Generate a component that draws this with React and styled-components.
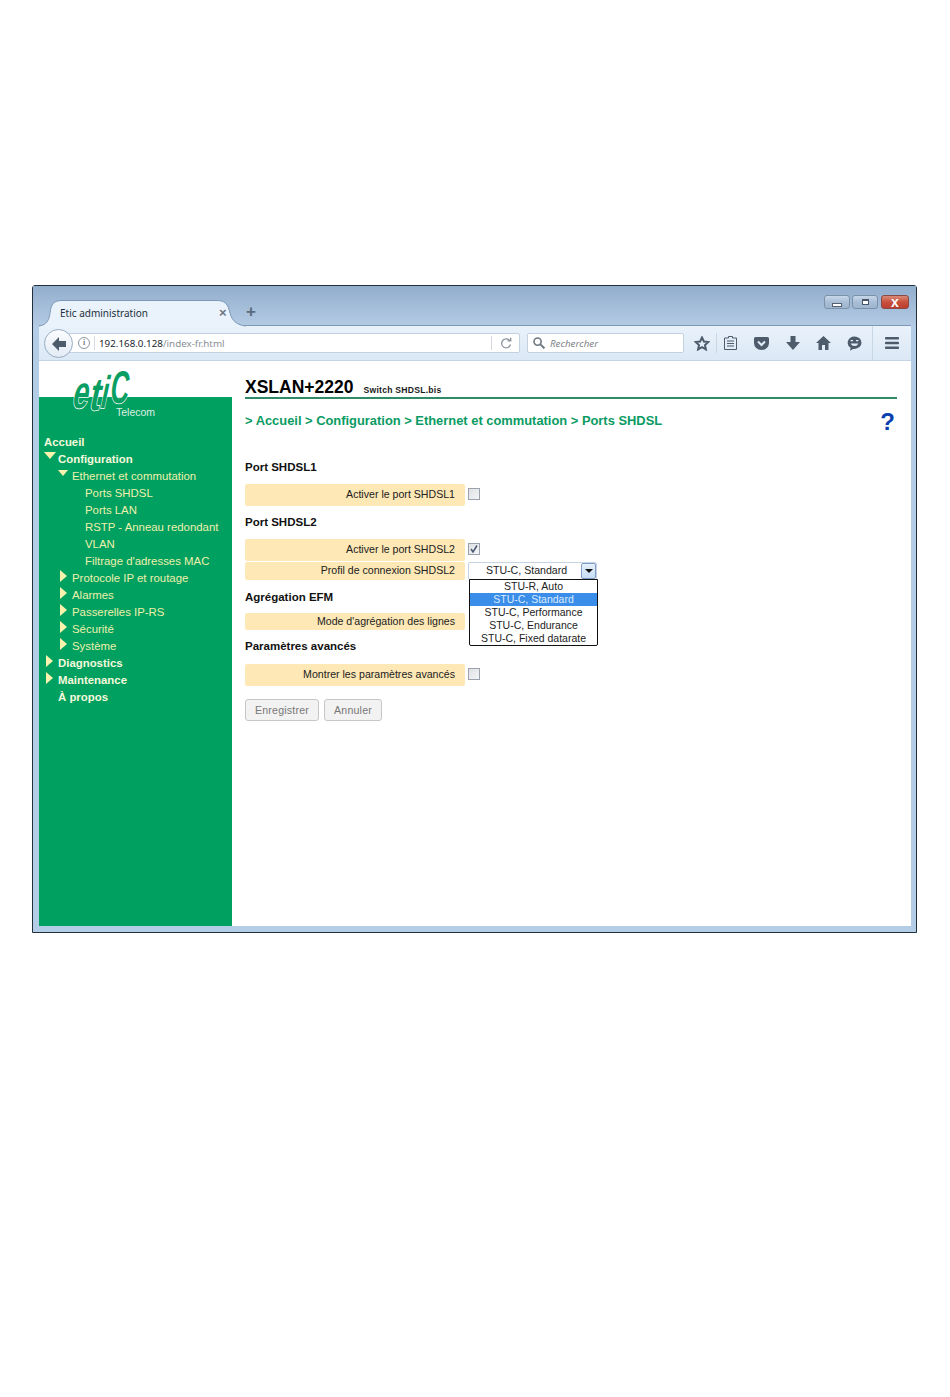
import React from "react";
import styled, { createGlobalStyle } from "styled-components";

const GlobalStyle = createGlobalStyle`
  html, body { margin: 0; padding: 0; background: #fff; }
  body { font-family: "Liberation Sans", Arial, sans-serif; }
`;

const Page = styled.div`
  width: 950px;
  height: 1397px;
  padding: 285px 0 0 32px;
  box-sizing: border-box;
`;

const Window = styled.div`
  width: 885px;
  height: 648px;
  box-sizing: border-box;
  border: 1px solid #22303c;
  border-radius: 3px 3px 0 0;
  background: #b4cde6;
  display: flex;
  flex-direction: column;
`;

const TitleBar = styled.div`
  height: 39px;
  flex: none;
  display: flex;
  justify-content: space-between;
  background: linear-gradient(#92aecd, #b3cae3);
`;

const Tab = styled.div`
  position: relative;
  z-index: 1;
  width: 207px;
  height: 26px;
  margin: 14px 0 -1px 6px;
  box-sizing: border-box;
  padding: 0 0 0 21px;
  display: flex;
  align-items: center;
  font: 10px "Noto Sans", "Liberation Sans", sans-serif;
  color: #24303c;
  span { position: relative; }
  svg { position: absolute; left: 0; top: 0; }
`;

const TabClose = styled.span`
  position: absolute !important;
  left: 180px;
  top: 5px;
  font: bold 13px "Liberation Sans", sans-serif;
  color: #6d7580;
`;

const NewTab = styled.div`
  position: absolute;
  left: 207px;
  top: 2px;
  font: bold 17px "Liberation Sans", sans-serif;
  color: #5a6b7e;
`;

const Controls = styled.div`
  display: flex;
  gap: 2px;
  padding: 9px 7px 0 0;
`;

const ControlButton = styled.div`
  width: ${(p) => (p.$close ? "28px" : "26px")};
  height: 14px;
  margin-left: ${(p) => (p.$close ? "1px" : "0")};
  box-sizing: border-box;
  border: 1px solid ${(p) => (p.$close ? "#8a4a44" : "#7c90a8")};
  border-radius: 3px;
  background: ${(p) =>
    p.$close
      ? "linear-gradient(#d98a78 0, #c8503c 50%, #bd3f30 100%)"
      : "linear-gradient(#c7d7e8 0, #a9bfd7 50%, #9db5cf 100%)"};
  display: flex;
  align-items: center;
  justify-content: center;
`;

const MinGlyph = styled.div`
  width: 8px;
  height: 2px;
  margin-top: 5px;
  background: #fff;
  border: 1px solid #54606e;
`;

const MaxGlyph = styled.div`
  width: 5px;
  height: 3px;
  background: #fff;
  border: 1px solid #4a5665;
  border-top-width: 2px;
`;

const CloseGlyph = styled.div`
  font: bold 14px/11px "Liberation Sans", sans-serif;
  color: #fff;
`;

const Toolbar = styled.div`
  position: relative;
  height: 36px;
  flex: none;
  display: flex;
  align-items: center;
  padding: 0 0 0 12px;
  margin: 0 5px 0 6px;
  box-sizing: border-box;
  border-top: 1px solid #7e99b6;
  background: linear-gradient(#e9f2fb, #dbe8f5);
  border-bottom: 1px solid #c4d4e4;
`;

const BackButton = styled.div`
  position: absolute;
  left: 5px;
  top: 3px;
  width: 27px;
  height: 27px;
  border-radius: 50%;
  border: 1px solid #98adc2;
  background: linear-gradient(#fbfdff, #e3ebf4);
  display: flex;
  align-items: center;
  justify-content: center;
`;

const UrlBar = styled.div`
  width: 469px;
  height: 20px;
  padding-left: 37px;
  box-sizing: border-box;
  flex: none;
  border: 1px solid #c3d1e0;
  border-radius: 2px;
  background: #fff;
  display: flex;
  align-items: center;
  font: 9.8px "Noto Sans", "Liberation Sans", sans-serif;
  color: #8a8f96;
`;

const InfoIcon = styled.div`
  width: 10px;
  height: 10px;
  border: 1px solid #8d969f;
  border-radius: 50%;
  font: bold 8px/10px "Liberation Serif", serif;
  text-align: center;
  color: #7b848d;
  margin-left: -11px;
  flex: none;
`;

const Divider = styled.div`
  width: 1px;
  height: 14px;
  background: #d3d9df;
  margin: ${(p) => p.$margin};
  flex: none;
`;

const Host = styled.span`
  color: #22282e;
`;

const Reload = styled.div`
  width: 27px;
  display: flex;
  justify-content: center;
`;

const SearchBox = styled.div`
  width: 157px;
  height: 20px;
  margin-left: 7px;
  padding-left: 5px;
  box-sizing: border-box;
  flex: none;
  border: 1px solid #c3d1e0;
  border-radius: 2px;
  background: #fff;
  display: flex;
  align-items: center;
  gap: 5px;
  font: italic 9.8px "Noto Sans", "Liberation Sans", sans-serif;
  color: #7d838a;
`;

const ToolIcons = styled.div`
  display: flex;
  align-items: center;
  height: 100%;
  margin-left: 10px;
`;

const ToolIcon = styled.div`
  width: ${(p) => p.$w || 31}px;
  display: flex;
  justify-content: center;
  flex: none;
`;

const ToolSep = styled.div`
  width: 1px;
  height: ${(p) => p.$h}px;
  margin: ${(p) => p.$margin};
  background: #c8d7e6;
  flex: none;
`;

const Content = styled.div`
  flex: 1;
  min-height: 0;
  display: flex;
  margin: 0 5px 6px 6px;
  background: #fff;
`;

const Sidebar = styled.aside`
  position: relative;
  width: 193px;
  flex: none;
  display: flex;
  flex-direction: column;
`;

const LogoSpace = styled.div`
  height: 36px;
  flex: none;
`;

const Logo = styled.svg`
  position: absolute;
  left: 28px;
  top: 4px;
  overflow: visible;
`;

const LogoText = styled.text`
  font-family: "Liberation Sans", sans-serif;
  font-size: 46px;
  font-weight: 700;
  fill: #0a9e62;
  stroke: #fff;
  stroke-width: 1.6px;
  paint-order: stroke;
`;

const Telecom = styled.div`
  position: absolute;
  left: 77px;
  top: 45px;
  font-size: 10.5px;
  color: #dff1e4;
`;

const GreenPanel = styled.nav`
  flex: 1;
  background: #00a060;
  padding-top: 36px;
`;

const NavRow = styled.div`
  height: 17px;
  padding-left: ${(p) => [5, 19, 46][p.$level]}px;
  display: flex;
  align-items: center;
  font-size: 11.4px;
  font-weight: ${(p) => (p.$level === 0 ? 700 : 400)};
  color: ${(p) => (p.$level === 0 ? "#f4f9dc" : "#eef0ac")};
  white-space: nowrap;
`;

const ArrowBox = styled.span`
  width: 14px;
  flex: none;
  display: flex;
  align-items: center;
  padding-left: ${(p) => (p.$open ? 0 : 2)}px;
  box-sizing: border-box;
`;

const ArrowDown = styled.i`
  display: block;
  margin-top: -6px;
  border-style: solid;
  border-color: #fbf3ad transparent transparent transparent;
  border-width: ${(p) => (p.$big ? "7px 6px 0 6px" : "6px 5px 0 5px")};
`;

const ArrowRight = styled.i`
  display: block;
  margin-top: -4px;
  border-style: solid;
  border-color: transparent transparent transparent #fbf3ad;
  border-width: 6px 0 6px 7px;
`;

const Main = styled.main`
  flex: 1;
  min-width: 0;
  padding: 0 14px 0 13px;
`;

const Header = styled.header`
  height: 38px;
  box-sizing: border-box;
  display: flex;
  align-items: baseline;
  gap: 10px;
  padding-top: 16px;
  border-bottom: 2px solid #2f8a68;
`;

const Product = styled.h1`
  margin: 0;
  font-size: 17.5px;
  line-height: 20px;
  font-weight: 700;
  color: #000;
`;

const Subtitle = styled.span`
  font-size: 8.6px;
  font-weight: 700;
  letter-spacing: 0.25px;
  color: #1a1a1a;
`;

const CrumbBar = styled.div`
  height: 18px;
  margin-top: 12px;
  display: flex;
  align-items: center;
  justify-content: space-between;
`;

const Crumbs = styled.div`
  font-size: 12.9px;
  font-weight: 700;
  color: #0a9b63;
  white-space: nowrap;
`;

const Help = styled.div`
  font-size: 24px;
  font-weight: 700;
  line-height: 18px;
  color: #0a3fb0;
  margin: 4px 2px 0 0;
`;

const Heading = styled.h2`
  margin: ${(p) => p.$top}px 0 ${(p) => p.$bottom}px;
  font-size: 11.5px;
  line-height: 16px;
  font-weight: 700;
  color: #111;
`;

const Row = styled.div`
  display: flex;
  align-items: center;
  margin-bottom: ${(p) => p.$after || 0}px;
`;

const Label = styled.div`
  width: 220px;
  height: ${(p) => p.$h}px;
  box-sizing: border-box;
  padding: 0 10px 2px 0;
  display: flex;
  align-items: center;
  justify-content: flex-end;
  flex: none;
  border-radius: 2px;
  background: #fde8b6;
  font-size: 10.6px;
  color: #222;
  white-space: nowrap;
`;

const Check = styled.div`
  width: 12px;
  height: 12px;
  margin: 0 0 2px 3px;
  box-sizing: border-box;
  border: 1px solid #9aa3ad;
  background: linear-gradient(135deg, #dfe2e6, #f4f5f6);
  display: flex;
  align-items: center;
  justify-content: center;
`;

const Field = styled.div`
  position: relative;
  margin-left: 3px;
  width: 129px;
  height: 18px;
  box-sizing: border-box;
  border: 1px solid #c4d2e3;
  border-radius: 2px;
  background: #fff;
  display: flex;
  align-items: center;
  font-size: 10.6px;
  color: #222;
`;

const FieldValue = styled.div`
  flex: 1;
  padding: 0 0 2px 3px;
  text-align: center;
`;

const FieldArrow = styled.div`
  width: 15px;
  height: 100%;
  flex: none;
  box-sizing: border-box;
  border: 1px solid #7f9ec6;
  border-radius: 2px;
  background: linear-gradient(#e6f0fb, #c7dcf3);
  display: flex;
  align-items: center;
  justify-content: center;
  &::after {
    content: "";
    border-style: solid;
    border-color: #111 transparent transparent transparent;
    border-width: 4px 4px 0 4px;
  }
`;

const Options = styled.ul`
  position: absolute;
  left: 0;
  top: 16px;
  z-index: 2;
  width: 129px;
  height: 67px;
  margin: 0;
  padding: 0;
  box-sizing: border-box;
  list-style: none;
  border: 1px solid #111;
  border-radius: 0 0 2px 2px;
  background: #fff;
`;

const Option = styled.li`
  height: 13px;
  line-height: 13px;
  text-align: center;
  font-size: 10.5px;
  color: ${(p) => (p.$active ? "#dcebff" : "#222")};
  background: ${(p) => (p.$active ? "#3a8eea" : "transparent")};
`;

const Buttons = styled.div`
  display: flex;
  gap: 5px;
  margin-top: 13px;
`;

const Button = styled.button`
  width: ${(p) => p.$w}px;
  height: 22px;
  padding: 0;
  box-sizing: border-box;
  border: 1px solid #c6c6c6;
  border-radius: 3px;
  background: #f2f2f2;
  font: 10.6px "Liberation Sans", sans-serif;
  letter-spacing: 0.2px;
  color: #777;
`;

const nav = [
  { level: 0, label: "Accueil", bare: true },
  { level: 0, label: "Configuration", arrow: "down" },
  { level: 1, label: "Ethernet et commutation", arrow: "down" },
  { level: 2, label: "Ports SHDSL", bare: true },
  { level: 2, label: "Ports LAN", bare: true },
  { level: 2, label: "RSTP - Anneau redondant", bare: true },
  { level: 2, label: "VLAN", bare: true },
  { level: 2, label: "Filtrage d'adresses MAC", bare: true },
  { level: 1, label: "Protocole IP et routage", arrow: "right" },
  { level: 1, label: "Alarmes", arrow: "right" },
  { level: 1, label: "Passerelles IP-RS", arrow: "right" },
  { level: 1, label: "Sécurité", arrow: "right" },
  { level: 1, label: "Système", arrow: "right" },
  { level: 0, label: "Diagnostics", arrow: "right" },
  { level: 0, label: "Maintenance", arrow: "right" },
  { level: 0, label: "À propos" },
];

const profiles = [
  "STU-R, Auto",
  "STU-C, Standard",
  "STU-C, Performance",
  "STU-C, Endurance",
  "STU-C, Fixed datarate",
];

const ICON = "#4d5b6b";

const App = () => (
  <Page>
    <GlobalStyle />
    <Window>
      <TitleBar>
        <Tab>
          <svg width="207" height="27" viewBox="0 0 207 27">
            <path
              d="M0 26 C7 25 10 21 11 13 C12 4 15 .5 23 .5 H178 C186 .5 189 4 191 13 C193 21 198 25 207 26 V27 H0 Z"
              fill="#eaf2fb"
            />
            <path
              d="M0 26 C7 25 10 21 11 13 C12 4 15 .5 23 .5 H178 C186 .5 189 4 191 13 C193 21 198 25 207 26"
              fill="none"
              stroke="#7e99b6"
            />
          </svg>
          <span>Etic administration</span>
          <TabClose>×</TabClose>
          <NewTab>+</NewTab>
        </Tab>
        <Controls>
          <ControlButton><MinGlyph /></ControlButton>
          <ControlButton><MaxGlyph /></ControlButton>
          <ControlButton $close><CloseGlyph>x</CloseGlyph></ControlButton>
        </Controls>
      </TitleBar>

      <Toolbar>
        <BackButton>
          <svg width="16" height="14" viewBox="0 0 16 14">
            <path d="M8 0 L1 7 L8 14 V10 H15 V4 H8 Z" fill={ICON} />
          </svg>
        </BackButton>
        <UrlBar>
          <InfoIcon>i</InfoIcon>
          <Divider $margin="0 4px" />
          <Host>192.168.0.128</Host>/index-fr.html
          <Divider $margin="0 0 0 auto" />
          <Reload>
            <svg width="12" height="12" viewBox="0 0 12 12" fill="none" stroke="#8a929b" strokeWidth="1.3">
              <path d="M10 4 A4.5 4.5 0 1 0 10.5 7.5" />
              <path d="M7.5 3.8 H10.7 V.8" />
            </svg>
          </Reload>
        </UrlBar>
        <SearchBox>
          <svg width="12" height="12" viewBox="0 0 12 12" fill="none" stroke="#6f7881" strokeWidth="1.6">
            <circle cx="4.6" cy="4.6" r="3.6" />
            <path d="M7.4 7.4 L11.4 11.4" strokeWidth="2" />
          </svg>
          Rechercher
        </SearchBox>
        <ToolIcons>
          <ToolIcon $w={16}>
            <svg width="16" height="15" viewBox="0 0 16 15" fill="none" stroke={ICON} strokeWidth="2">
              <path d="M8 1.5 L9.9 5.5 L14.3 6 L11 9 L11.9 13.4 L8 11.2 L4.1 13.4 L5 9 L1.7 6 L6.1 5.5 Z" />
            </svg>
          </ToolIcon>
          <ToolSep $h={20} $margin="0 -2px 0 6px" />
          <ToolIcon>
            <svg width="13" height="14" viewBox="0 0 13 14">
              <path d="M4.5 2 V.5 H8.5 V2 H12.5 V13.5 H.5 V2 Z" fill="#e3edf7" stroke={ICON} />
              <path d="M3 5 H10 M3 7.5 H10 M3 10 H10" stroke={ICON} strokeWidth="1.2" />
            </svg>
          </ToolIcon>
          <ToolIcon>
            <svg width="15" height="13" viewBox="0 0 15 13">
              <path d="M1.5 0 H13.5 A1.5 1.5 0 0 1 15 1.5 V6 A7.5 7 0 0 1 0 6 V1.5 A1.5 1.5 0 0 1 1.5 0 Z" fill={ICON} />
              <path d="M4 4.5 L7.5 8 L11 4.5" fill="none" stroke="#e3edf7" strokeWidth="2" />
            </svg>
          </ToolIcon>
          <ToolIcon>
            <svg width="14" height="14" viewBox="0 0 14 14">
              <path d="M4.5 0 H9.5 V6 H14 L7 14 L0 6 H4.5 Z" fill={ICON} />
            </svg>
          </ToolIcon>
          <ToolIcon>
            <svg width="15" height="14" viewBox="0 0 15 14">
              <path d="M7.5 0 L15 7 H12.5 V14 H9 V9 H6 V14 H2.5 V7 H0 Z" fill={ICON} />
            </svg>
          </ToolIcon>
          <ToolIcon>
            <svg width="15" height="15" viewBox="0 0 15 15">
              <path d="M7.5 .5 A7 6.2 0 0 1 7.5 12.9 H6 L3 14.8 L3.6 11.7 A7 6.2 0 0 1 7.5 .5 Z" fill={ICON} />
              <path d="M3.6 7.4 A4.2 4.2 0 0 0 11.4 7.4 Z" fill="#e3edf7" />
              <path d="M3.6 4.7 H6 M9 4.7 H11.4" stroke="#e3edf7" strokeWidth="1.3" />
            </svg>
          </ToolIcon>
          <ToolSep $h={34} $margin="0 0 0 2px" />
          <ToolIcon $w={38}>
            <svg width="14" height="12" viewBox="0 0 14 12" fill={ICON}>
              <rect width="14" height="2.6" rx=".8" />
              <rect y="4.7" width="14" height="2.6" rx=".8" />
              <rect y="9.4" width="14" height="2.6" rx=".8" />
            </svg>
          </ToolIcon>
        </ToolIcons>
      </Toolbar>

      <Content>
        <Sidebar>
          <LogoSpace />
          <GreenPanel>
            {nav.map((item) => (
              <NavRow key={item.label} $level={item.level}>
                {!item.bare && (
                  <ArrowBox $open={item.arrow === "down"}>
                    {item.arrow === "down" && <ArrowDown $big={item.level === 0} />}
                    {item.arrow === "right" && <ArrowRight />}
                  </ArrowBox>
                )}
                {item.label}
              </NavRow>
            ))}
          </GreenPanel>
          <Logo width="70" height="50" viewBox="0 0 70 50">
            <LogoText transform="translate(4 43) skewX(-12) scale(.62 1)">e</LogoText>
            <LogoText transform="translate(21 45) skewX(-12) scale(.7 1)">t</LogoText>
            <LogoText transform="translate(32 43) skewX(-12) scale(.55 1)">i</LogoText>
            <LogoText transform="translate(42 38) skewX(-8) scale(.55 1)">C</LogoText>
          </Logo>
          <Telecom>Telecom</Telecom>
        </Sidebar>

        <Main>
          <Header>
            <Product>XSLAN+2220</Product>
            <Subtitle>Switch SHDSL.bis</Subtitle>
          </Header>
          <CrumbBar>
            <Crumbs>&gt; Accueil &gt; Configuration &gt; Ethernet et commutation &gt; Ports SHDSL</Crumbs>
            <Help>?</Help>
          </CrumbBar>

          <Heading $top={30} $bottom={9}>Port SHDSL1</Heading>
          <Row>
            <Label $h={22}>Activer le port SHDSL1</Label>
            <Check />
          </Row>

          <Heading $top={8} $bottom={9}>Port SHDSL2</Heading>
          <Row $after={1}>
            <Label $h={22}>Activer le port SHDSL2</Label>
            <Check>
              <svg width="8" height="8" viewBox="0 0 8 8" fill="none" stroke="#4a5a70" strokeWidth="1.5">
                <path d="M1 4 L3 7 L7 .5" />
              </svg>
            </Check>
          </Row>
          <Row>
            <Label $h={18}>Profil de connexion SHDSL2</Label>
            <Field>
              <FieldValue>STU-C, Standard</FieldValue>
              <FieldArrow />
              <Options>
                {profiles.map((p) => (
                  <Option key={p} $active={p === "STU-C, Standard"}>{p}</Option>
                ))}
              </Options>
            </Field>
          </Row>

          <Heading $top={9} $bottom={8}>Agrégation EFM</Heading>
          <Row>
            <Label $h={17}>Mode d'agrégation des lignes</Label>
          </Row>

          <Heading $top={8} $bottom={10}>Paramètres avancés</Heading>
          <Row>
            <Label $h={22}>Montrer les paramètres avancés</Label>
            <Check />
          </Row>

          <Buttons>
            <Button $w={74}>Enregistrer</Button>
            <Button $w={58}>Annuler</Button>
          </Buttons>
        </Main>
      </Content>
    </Window>
  </Page>
);

export default App;
